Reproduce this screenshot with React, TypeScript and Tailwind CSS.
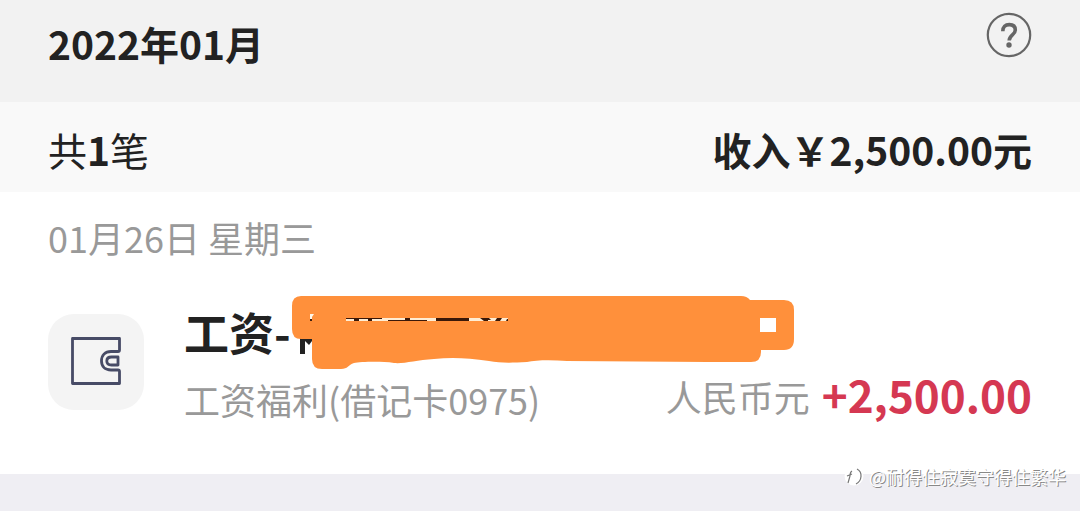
import React from "react";

function HelpIcon() {
  return (
    <svg viewBox="0 0 46 46" className="size-[46px]" fill="none" stroke="#666666" aria-hidden="true">
      <circle cx="23" cy="23" r="21.2" strokeWidth="2.2" />
      <path d="M16.8 19.2C16.8 14.8 19.3 12.6 23.3 12.6C27.2 12.6 29.3 14.8 29.3 18C29.3 23 23.2 22.8 23.2 28.6" strokeWidth="3.6" />
      <circle cx="23" cy="33" r="2.7" fill="#666666" stroke="none" />
    </svg>
  );
}

function WalletIcon() {
  return (
    <svg viewBox="0 0 96 96" className="size-24" fill="none" stroke="#474b66" strokeWidth="2.8" strokeLinejoin="round" aria-hidden="true">
      <path d="M71.5 36V24.5H24.5V69.500H71.5V57.5Q71.5 56 70 56H63C57 56 53.5 52.5 53.5 47C53.5 41.5 57 37.5 63 37.5H70Q71.5 37.5 71.5 36" />
      <path d="M70 43H63.5C60.5 43 58.8 44.5 58.8 47C58.8 49.5 60.5 51 63.5 51H70Z" />
    </svg>
  );
}

function Marker() {
  return (
    <svg viewBox="0 0 504 76" className="absolute -top-[15px] left-[106px] h-[76px] w-[504px]" aria-hidden="true">
      <path d="M10 43H15V59H10ZM15 43H22V46L19 50L15 46Z" fill="#222222" />
      <path
        fill="#ff903b"
        fillRule="evenodd"
        d="M11 1H451Q457 1 460 5H494Q504 5 504 15V44Q504 55 494 55H471V57Q471 67 461 67H418L277 66C262 65 246 65 237 67C220 68 210 68 199 66C178 63 162 62 144 64C126 65 114 69 104 68C90 66 70 67 64 68C58 70 58 74 51 74H32Q22 74 22 64V44H11Q2 44 2 34V11Q2 1 11 1ZM470 23V37H486V23Z"
      />
      <path d="M20 19H24L22 22V26H20Z" fill="#fff7e8" />
      <path d="M20 24H22V26H20Z" fill="#402010" />
      <path d="M56 23H218L217 26H56Z" fill="#ffedd4" />
      <path
        fill="#3a1808"
        d="M56 23H92V24H82V26H78V24H69V26H64V24H56ZM98 25H115V23H120V25H137V26H98ZM146 23H179V26H146ZM190 23H199L201 25H198V26H194ZM207 23H212L210 26H205ZM217 24H218V26H216Z"
      />
    </svg>
  );
}

function Watermark() {
  return (
    <div className="absolute -top-3 right-3.5 flex items-center gap-1 text-lg leading-7 text-white [text-shadow:1px_1px_0_#888888]">
      <svg viewBox="0 0 22 22" className="size-[22px]" fill="none" aria-hidden="true">
        <circle cx="11" cy="11" r="9.5" fill="#ffffff" />
        <path d="M14 4C20 7 19 16 13 19M9 6C7 7 7 9 7 11L5 18M4 11L9 9" stroke="#777777" strokeWidth="1.2" />
      </svg>
      <span>@耐得住寂寞守得住繁华</span>
    </div>
  );
}

export default function App() {
  return (
    <main className="min-h-screen bg-[#efeef3] font-['Noto_Sans_CJK_SC',sans-serif] text-[#222222]">
      <header className="flex items-start justify-between bg-[#f2f2f2] px-12 pt-3 pb-7">
        <h1 className="text-[39px] leading-[62px] font-bold">2022年01月</h1>
        <button type="button" aria-label="帮助">
          <HelpIcon />
        </button>
      </header>
      <section className="flex items-center justify-between bg-[#f9f9f9] px-12 pt-[17px] pb-[13px] text-[39px] leading-[60px]">
        <p>
          共<b>1</b>笔
        </p>
        <p className="font-bold">收入￥2,500.00元</p>
      </section>
      <section className="bg-white px-12 pt-[18px] pb-12 text-4xl text-[#999999]">
        <h2 className="leading-[54px]">01月26日 星期三</h2>
        <article className="mt-11 flex items-start gap-10">
          <div className="mt-1.5 shrink-0 rounded-[26px] bg-[#f4f4f4]">
            <WalletIcon />
          </div>
          <div className="min-w-0 flex-1">
            <div className="relative mt-0.5">
              <h3 className="text-[45px] leading-[44px] font-bold text-[#222222]">工资-</h3>
              <Marker />
            </div>
            <div className="mt-[18px] flex items-start justify-between">
              <p className="leading-[54px]">工资福利(借记卡0975)</p>
              <p className="flex items-center gap-3 leading-[48px]">
                人民币元
                <strong className="pb-1 text-[44px] leading-[40px] font-bold text-[#d53852]">+2,500.00</strong>
              </p>
            </div>
          </div>
        </article>
      </section>
      <footer className="relative">
        <Watermark />
      </footer>
    </main>
  );
}
